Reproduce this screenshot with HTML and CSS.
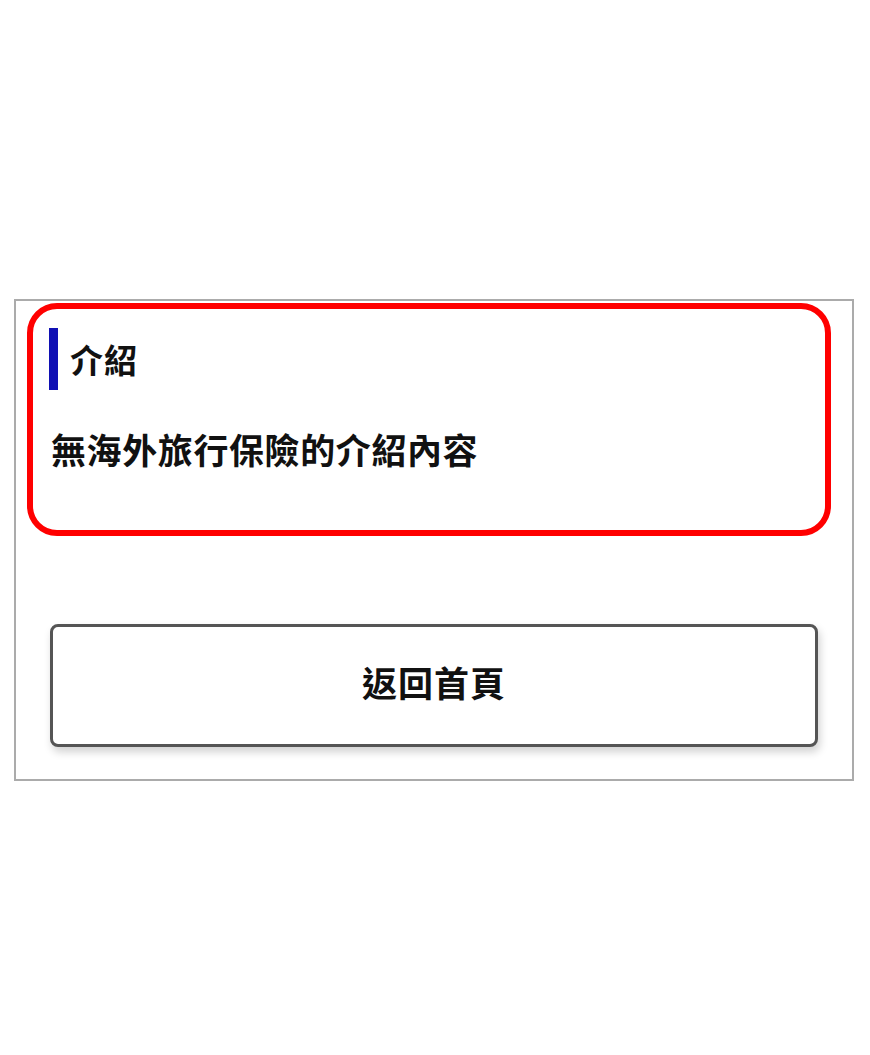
FILE: index.html
```html
<!DOCTYPE html>
<html lang="zh-Hant">
<head>
<meta charset="utf-8">
<link rel="stylesheet" href="styles.css">
</head>
<body>
<div class="panel">
  <div class="highlight">
    <div class="heading"><span class="bar"></span><span class="heading-text">介紹</span></div>
    <p class="desc">無海外旅行保險的介紹內容</p>
  </div>
  <div class="btn-wrap">
    <button class="btn" type="button">返回首頁</button>
  </div>
</div>
</body>
</html>
```
FILE: styles.css
```css
html, body {
  margin: 0;
  padding: 0;
  background: #ffffff;
}
body {
  font-family: "Noto Sans CJK TC", "Noto Sans CJK SC", sans-serif;
  color: #111;
}
.panel {
  box-sizing: border-box;
  margin: 299px 0 0 14px;
  width: 840px;
  height: 482px;
  border: 2px solid #ababab;
  background: #fff;
  padding: 2px 0 0 11px;
}
.highlight {
  box-sizing: border-box;
  width: 804px;
  height: 233px;
  border: 6px solid #ff0000;
  border-radius: 30px;
  padding: 19px 0 0 16px;
}
.heading {
  display: flex;
  align-items: center;
  height: 62px;
}
.bar {
  width: 9px;
  height: 62px;
  background: #1010b4;
  margin-right: 12px;
}
.heading-text {
  font-size: 33px;
  font-weight: 700;
  line-height: 1;
  letter-spacing: 1px;
}
.desc {
  margin: 35px 0 0 2px;
  font-size: 35px;
  font-weight: 700;
  line-height: 48px;
  letter-spacing: 0.6px;
}
.btn-wrap {
  margin: 88px 0 0 23px;
}
.btn {
  box-sizing: border-box;
  width: 768px;
  height: 123px;
  border: 3px solid #555;
  border-radius: 8px;
  background: #fff;
  box-shadow: 2px 5px 8px rgba(0, 0, 0, 0.18);
  font-family: "Noto Sans CJK TC", "Noto Sans CJK SC", sans-serif;
  font-size: 35px;
  font-weight: 700;
  letter-spacing: 1px;
  color: #111;
  padding: 0 0 8px 0;
  cursor: pointer;
}
```
